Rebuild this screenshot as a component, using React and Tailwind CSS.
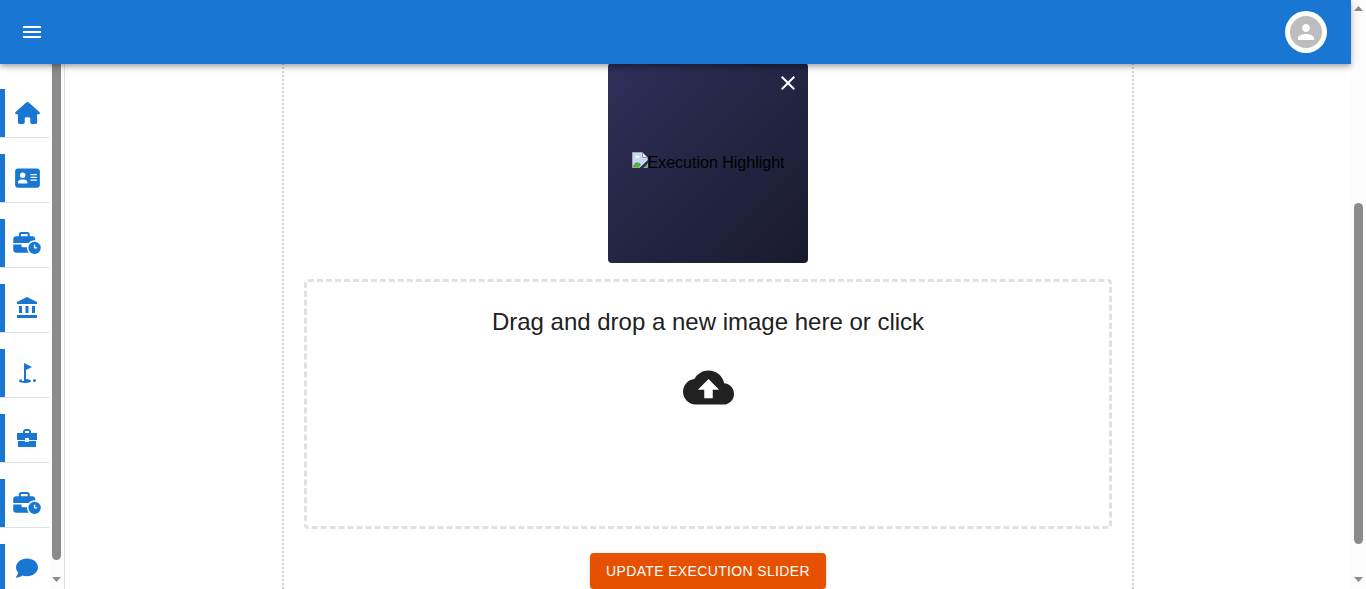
import { FaHouse, FaAddressCard, FaBusinessTime, FaComment } from "react-icons/fa6";
import { MdClose, MdCloudUpload, MdGolfCourse, MdMenu, MdPerson } from "react-icons/md";

function BankIcon() {
  return (
    <svg viewBox="0 0 24 24" className="size-6 fill-current" aria-hidden="true">
      <path d="M4 10v7h3v-7H4zm6.500 0v7h3v-7h-3zM2 22h20v-3H2v3zm15-12v7h3v-7h-3zm-5-9L2 6v2h20V6L12 1z" />
    </svg>
  );
}

function BriefcaseIcon() {
  return (
    <svg viewBox="0 0 24 24" className="size-6 fill-current" aria-hidden="true">
      <path d="M10 16v-1H3.010v6H21v-6h-7v1h-4zm12-9h-6V5l-2-2h-4L7.990 5v2H2v7h8v-2h4v2h8V7zm-8 0h-4V5h4v2z" />
    </svg>
  );
}

const navItems = [
  { label: "Home", icon: <FaHouse className="h-[22px] w-[25px]" /> },
  { label: "Profile", icon: <FaAddressCard className="h-[22px] w-[25px]" /> },
  { label: "Experience", icon: <FaBusinessTime className="h-[22px] w-[28px]" /> },
  { label: "Institutions", icon: <BankIcon /> },
  { label: "Milestones", icon: <MdGolfCourse className="size-6" /> },
  { label: "Business", icon: <BriefcaseIcon /> },
  { label: "Execution", icon: <FaBusinessTime className="h-[22px] w-[28px]" /> },
  { label: "Messages", icon: <FaComment className="size-[22px]" /> },
];

function Arrow({ up = false }) {
  return (
    <svg viewBox="0 0 9 5" className="h-[5px] w-[9px] shrink-0 fill-[#8b8b8b]" aria-hidden="true">
      <path d={up ? "M0 5 4.5 0 9 5z" : "M0 0h9L4.5 5z"} />
    </svg>
  );
}

function BrokenImage() {
  return (
    <svg viewBox="0 0 16 16" className="size-4 shrink-0" aria-hidden="true">
      <path d="M.5.5h10l5 5v3L8 15.500H.5z" fill="#c6d7f6" />
      <path d="M3 5.500a1.500 1.500 0 0 1 2-1.500 2 2 0 0 1 3 1.500z" fill="#fff" />
      <path d="M1 15v-1c2-4.500 5-5 8-1.500L7 15z" fill="#55ad35" />
      <path d="M.5 15.500V.5h10l5 5v2.500M.5 15.500H8M11.500 15.500h4V11" fill="none" stroke="#a5a5a5" />
      <path d="M12 15l3-3v3z" fill="#55ad35" />
      <path d="M10.500.5v5h5z" fill="#fff" stroke="#8f8f8f" />
      <path d="M8 16l8-7v2l-5 5z" fill="#292b4e" />
    </svg>
  );
}

function Header() {
  return (
    <header className="relative z-10 flex h-16 shrink-0 items-center justify-between bg-[#1976d2] px-5 pr-6 text-white shadow-[0_2px_4px_-1px_rgba(0,0,0,0.2),0_4px_5px_0_rgba(0,0,0,0.14),0_1px_10px_0_rgba(0,0,0,0.12)]">
      <button type="button" aria-label="Open menu">
        <MdMenu className="size-6" />
      </button>
      <button
        type="button"
        aria-label="Account"
        className="flex size-[42px] items-center justify-center rounded-full bg-white"
      >
        <span className="flex size-8 items-center justify-center rounded-full bg-[#bdbdbd]">
          <MdPerson className="size-6" />
        </span>
      </button>
    </header>
  );
}

function Sidebar() {
  return (
    <aside className="flex shrink-0 overflow-hidden border-r border-[#e0e0e0]">
      <nav className="flex w-[49px] flex-col gap-4 pt-[25px]">
        {navItems.map((item) => (
          <a
            key={item.label}
            href="#"
            aria-label={item.label}
            className="flex shrink-0 border-b border-[#e0e0e0] text-[#1976d2]"
          >
            <span className="h-12 w-[5px] bg-[#1976d2]" />
            <span className="flex h-12 flex-1 items-center justify-center">{item.icon}</span>
          </a>
        ))}
      </nav>
      <div className="flex w-[15px] flex-col items-center bg-[#fcfcfc] pb-[7px]" aria-hidden="true">
        <div className="mb-[17px] w-[9px] flex-1 rounded-b-full bg-[#8b8b8b]" />
        <Arrow />
      </div>
    </aside>
  );
}

export default function App() {
  return (
    <div className="flex h-screen overflow-hidden bg-white font-['Liberation_Sans',Arial,sans-serif] text-[#212121]">
      <div className="flex min-w-0 flex-1 flex-col">
        <Header />
        <div className="flex min-h-0 flex-1">
          <Sidebar />
          <main className="flex min-w-0 flex-1 justify-center overflow-hidden">
            <section className="-mt-px flex w-full max-w-[852px] shrink-0 flex-col items-center self-start border-x-2 border-dotted border-[#d0d0d0] px-5">
              <div className="relative flex size-[200px] items-center justify-center rounded bg-linear-to-br from-[#302f5a] via-[#232543] to-[#1a1a2e] text-base text-black">
                <div className="flex items-baseline">
                  <BrokenImage />
                  <span>Execution Highlight</span>
                </div>
                <button type="button" aria-label="Remove image" className="absolute top-2 right-2 text-white">
                  <MdClose className="size-6" />
                </button>
              </div>
              <button
                type="button"
                className="mt-4 flex h-[250px] w-full flex-col items-center rounded border-[3px] border-dashed border-[#e0e0e0] pt-6"
              >
                <span className="text-2xl">Drag and drop a new image here or click</span>
                <MdCloudUpload className="mt-6 size-[51px]" />
              </button>
              <button
                type="button"
                className="mt-6 h-9 rounded bg-[#e65100] px-4 text-sm tracking-wide whitespace-nowrap text-white shadow-[0_3px_1px_-2px_rgba(0,0,0,0.2),0_2px_2px_0_rgba(0,0,0,0.14),0_1px_5px_0_rgba(0,0,0,0.12)]"
              >
                UPDATE EXECUTION SLIDER
              </button>
            </section>
          </main>
        </div>
      </div>
      <div className="flex w-[15px] shrink-0 flex-col items-center bg-[#fcfcfc] pt-[6px] pb-[7px]" aria-hidden="true">
        <Arrow up />
        <div className="flex min-h-0 w-[9px] flex-1 flex-col">
          <div className="grow-[192]" />
          <div className="grow-[341] rounded-full bg-[#8b8b8b]" />
          <div className="grow-[33]" />
        </div>
        <Arrow />
      </div>
    </div>
  );
}
